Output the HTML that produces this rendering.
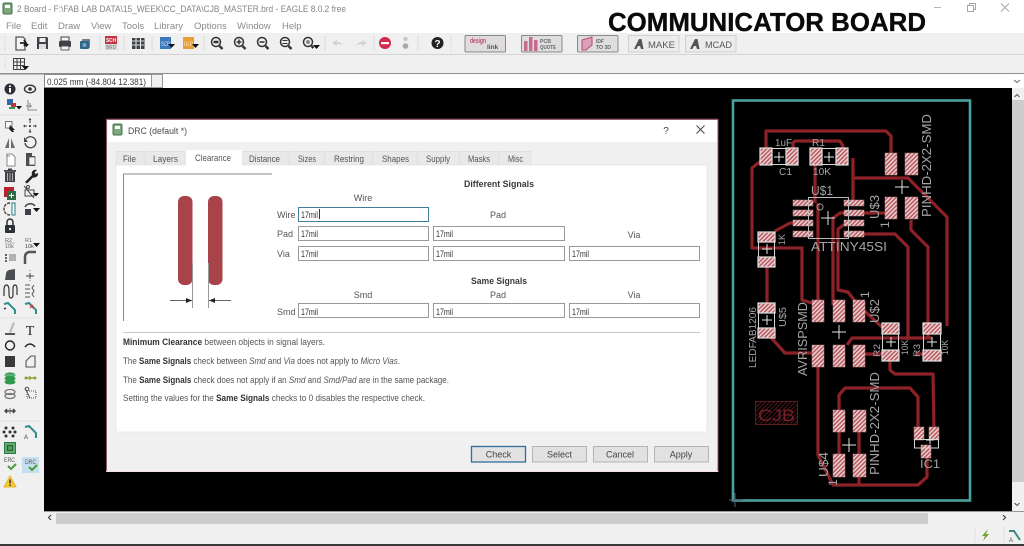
<!DOCTYPE html>
<html><head><meta charset="utf-8"><title>EAGLE DRC</title>
<style>
html,body{margin:0;padding:0;background:#f0f0f0;overflow:hidden}
svg{display:block;filter:blur(.3px)}
text{font-family:"Liberation Sans",sans-serif}
</style></head><body>
<svg xmlns="http://www.w3.org/2000/svg" width="1024" height="546" viewBox="0 0 1024 546">
<defs>
<pattern id="h" width="3" height="3" patternUnits="userSpaceOnUse" patternTransform="rotate(-45)">
<rect width="3" height="3" fill="#b2545a"/><rect width="3" height="1.600" fill="#eccfd0"/>
</pattern>
<pattern id="d" width="3" height="3" patternUnits="userSpaceOnUse" patternTransform="rotate(-45)">
<rect width="3" height="3" fill="#000"/><rect width="3" height="1" fill="#4c1418"/>
</pattern>
</defs>

<!-- window chrome -->
<rect width="1024" height="546" fill="#f0f0f0"/>
<rect width="1024" height="33" fill="#fff"/>
<rect x="3" y="3" width="9" height="11" rx="1.500" fill="#7da77c" stroke="#3f7048"/>
<rect x="5" y="5" width="5" height="3" fill="#fff"/>
<text x="17" y="12" font-size="9.500" fill="#858585" textLength="329" lengthAdjust="spacingAndGlyphs">2 Board - F:\FAB LAB DATA\15_WEEK\CC_DATA\CJB_MASTER.brd - EAGLE 8.0.2 free</text>
<g font-size="9.500" fill="#8a8a8a">
<text x="6" y="29">File</text><text x="31" y="29">Edit</text><text x="58" y="29">Draw</text><text x="91" y="29">View</text><text x="122" y="29">Tools</text><text x="154" y="29">Library</text><text x="194" y="29">Options</text><text x="237" y="29">Window</text><text x="282" y="29">Help</text>
</g>
<text x="608" y="31" font-size="26" font-weight="700" fill="#0a0a0a" stroke="#0a0a0a" stroke-width=".35" textLength="318" lengthAdjust="spacingAndGlyphs">COMMUNICATOR BOARD</text>
<path d="M934 7.500h7" stroke="#b5b5b5" fill="none"/>
<path d="M967.500 5.500h6v6h-6zM969.500 5.500v-2h6v6h-2" stroke="#a5a5a5" fill="none"/>
<path d="M1001 3.500l8 8M1009 3.500l-8 8" stroke="#a8a8a8" fill="none"/>

<rect y="54" width="1024" height="1" fill="#d4d4d4"/>
<rect y="73" width="1024" height="1.500" fill="#8e8e8e"/>
<path d="M5 36v15M5 58v12M451 35v17M118 36v15" stroke="#cfcfcf" stroke-dasharray="1 1"/>
<path d="M100 36v15M124 36v15M152 36v15M204 36v15M325 36v15M374 36v15M418 36v15" stroke="#dcdcdc"/>

<!-- top icons -->
<path d="M16 37h7l2 2v11h-9z" fill="#f4f4f4" stroke="#555" stroke-width="1.300"/>
<path d="M20 43h6l-2-3M26 43l-2 3" fill="none" stroke="#222" stroke-width="1.800"/>
<path d="M24 44h5l-2.500 3z" fill="#111"/>
<path d="M37 37h10l1 1v11h-11z" fill="#3e4148"/><rect x="39.500" y="38" width="6" height="4" fill="#eee"/><rect x="39" y="44" width="7" height="5" fill="#ddd"/>
<path d="M61 37h8v4h-8z" fill="#f4f4f4" stroke="#444"/><rect x="59" y="41" width="12" height="6" rx="1" fill="#3e4148"/><rect x="61" y="46" width="8" height="4" fill="#eee" stroke="#444" stroke-width=".8"/>
<rect x="82" y="39" width="8" height="9" rx="1" fill="#6d7f8c"/><rect x="80" y="41" width="9" height="8" rx="1" fill="#30688a"/><circle cx="84.500" cy="45" r="2" fill="#7ca4bd"/>
<rect x="105" y="36" width="12" height="14" fill="#d8d8d8"/><rect x="105" y="36" width="12" height="8" fill="#bf3540"/>
<text x="106" y="42" font-size="5" font-weight="700" fill="#fff" textLength="10" lengthAdjust="spacingAndGlyphs">SCH</text><text x="106" y="49" font-size="5" fill="#777" textLength="10" lengthAdjust="spacingAndGlyphs">BRD</text>
<g fill="#3e4148"><rect x="132" y="38" width="3.500" height="11"/><rect x="136.500" y="38" width="3.500" height="11"/><rect x="141" y="38" width="3.500" height="11"/></g>
<path d="M132 41h12M132 45h12" stroke="#ddd"/>
<rect x="160" y="37" width="11" height="12" fill="#3b78bc"/><text x="161" y="46" font-size="6" fill="#d7e6f5" textLength="9" lengthAdjust="spacingAndGlyphs">SCR</text><path d="M168 44h7l-3.500 4z" fill="#111"/>
<rect x="183" y="37" width="11" height="12" fill="#e99e3a"/><text x="184" y="46" font-size="6" fill="#fbe6c4" textLength="9" lengthAdjust="spacingAndGlyphs">ULP</text><path d="M192 44h7l-3.500 4z" fill="#111"/>
<g fill="none" stroke="#333" stroke-width="1.500">
<circle cx="216" cy="42" r="4.500"/><path d="M219.500 46l3 3" stroke-width="2.400"/><path d="M213.500 42h5" stroke-width="2.500"/>
<circle cx="239" cy="42" r="4.500"/><path d="M242.500 46l3 3" stroke-width="2.400"/><path d="M236.500 42h5M239 39.500v5"/>
<circle cx="262" cy="42" r="4.500"/><path d="M265.500 46l3 3" stroke-width="2.400"/><path d="M259.500 42h5"/>
<circle cx="285" cy="42" r="4.500"/><path d="M288.500 46l3 3" stroke-width="2.400"/><path d="M282.500 40.500h5M282.500 43.500h5" stroke-width="1"/>
<circle cx="308" cy="42" r="4.500"/><path d="M311.500 46l2 2" stroke-width="2.400"/>
</g>
<circle cx="308" cy="42" r="2" fill="#888"/><path d="M313 45h7l-3.500 4z" fill="#111"/>
<path d="M332 43l5-3v2c3 0 5 1 6 4-2-2-4-2-6-2v2z" fill="#d2d2d2"/>
<path d="M367 43l-5-3v2c-3 0-5 1-6 4 2-2 4-2 6-2v2z" fill="#d2d2d2"/>
<circle cx="385" cy="43" r="6" fill="#d3294a"/><rect x="381" y="42" width="8" height="2.200" fill="#fff"/>
<circle cx="405.500" cy="39" r="2.200" fill="#c8c8c8"/><circle cx="405.500" cy="46" r="2.800" fill="#a8a8a8"/>
<circle cx="437.500" cy="43" r="6" fill="#222"/><text x="437.500" y="47" font-size="10" font-weight="700" fill="#fff" text-anchor="middle">?</text>

<!-- branded buttons -->
<rect x="465" y="35.500" width="40.500" height="16.500" rx="1" fill="#e0dcdc" stroke="#888"/>
<text x="470" y="43" font-size="7" font-weight="700" fill="#b84a76" textLength="16" lengthAdjust="spacingAndGlyphs">design</text>
<text x="487" y="49" font-size="6.500" font-weight="700" fill="#555">link</text>
<rect x="521.500" y="35.500" width="40.500" height="16.500" rx="1" fill="#dedede" stroke="#888"/>
<g fill="#c76a90"><rect x="524" y="41" width="3.500" height="10"/><rect x="529" y="37" width="3.500" height="14"/><rect x="534" y="40" width="3.500" height="11"/></g>
<text x="540" y="43" font-size="5" font-weight="700" fill="#666" textLength="11" lengthAdjust="spacingAndGlyphs">PCB</text><text x="540" y="49" font-size="5" font-weight="700" fill="#666" textLength="16" lengthAdjust="spacingAndGlyphs">QUOTE</text>
<rect x="577.500" y="35.500" width="40.500" height="16.500" rx="1" fill="#dedede" stroke="#888"/>
<path d="M582 40l10-3v8l-6 5h-4z" fill="#dca0b8" stroke="#b84a76"/>
<text x="596" y="43" font-size="5" font-weight="700" fill="#666" textLength="8" lengthAdjust="spacingAndGlyphs">IDF</text><text x="596" y="49" font-size="5" font-weight="700" fill="#666" textLength="15" lengthAdjust="spacingAndGlyphs">TO 3D</text>
<rect x="628.500" y="35.500" width="50.500" height="16.500" fill="#ececec" stroke="#d0d0d0"/>
<path d="M634 49l5-10h2.500l2 10h-2.500l-1-3h-2l-1.500 3z" fill="#555"/>
<text x="648" y="48" font-size="9" fill="#555" textLength="27" lengthAdjust="spacingAndGlyphs">MAKE</text>
<rect x="685.500" y="35.500" width="50.500" height="16.500" fill="#ececec" stroke="#d0d0d0"/>
<path d="M690 49l5-10h2.500l2 10h-2.500l-1-3h-2l-1.500 3z" fill="#555"/>
<text x="705" y="48" font-size="9" fill="#555" textLength="27" lengthAdjust="spacingAndGlyphs">MCAD</text>

<!-- grid icon -->
<path d="M13.500 58.500h11v11h-11zM13.500 62h11M13.500 65.500h11M17 58.500v11M20.500 58.500v11" fill="none" stroke="#444"/>
<path d="M22 66h7l-3.500 4z" fill="#111"/>

<!-- command row -->
<rect x="44" y="74" width="980" height="14" fill="#fff"/>
<rect x="44.500" y="74.500" width="107" height="13" fill="#fff" stroke="#888"/>
<rect x="151.500" y="74.500" width="11" height="13" fill="#f0f0f0" stroke="#999"/>
<text x="47" y="85" font-size="9" fill="#3a3a3a" textLength="99" lengthAdjust="spacingAndGlyphs">0.025 mm (-84.804 12.381)</text>
<path d="M1014 80l3 2.500 3-2.500" fill="none" stroke="#666"/>

<!-- canvas -->
<rect x="44" y="88" width="968" height="423" fill="#000"/>
<rect x="1012" y="88" width="12" height="423" fill="#f0f0f0"/>
<rect x="1012" y="100" width="12" height="382" fill="#cdcdcd"/>
<path d="M1014.500 97l2.500-2.500 2.500 2.500M1014.500 503l2.500 2.500 2.500-2.500" fill="none" stroke="#555"/>
<rect x="44" y="511" width="980" height="1" fill="#999"/>
<rect x="44" y="512" width="968" height="12" fill="#f0f0f0"/>
<rect x="56" y="513" width="872" height="11" fill="#cdcdcd"/>
<path d="M51 515l-2.500 2.500 2.500 2.500M1003 515l2.500 2.500-2.500 2.500" fill="none" stroke="#444" stroke-width="1.200"/>
<rect y="544" width="1024" height="2" fill="#3a3a3a"/>
<path d="M975 527v16M1004 527v16" stroke="#e0e0e0"/>
<path d="M988 529l-6 7h3l-2 5 6-7h-3z" fill="#6ea32e"/>
<path d="M1009 531h5l6 9" fill="none" stroke="#3a8a86" stroke-width="2"/>
<text x="1009" y="542" font-size="6" fill="#555">A</text>

<!-- left toolbar -->
<circle cx="10" cy="89" r="5.500" fill="#2c2f36"/><rect x="9" y="88" width="2" height="4.500" fill="#fff"/><rect x="9" y="85.500" width="2" height="1.500" fill="#fff"/>
<ellipse cx="30" cy="89" rx="5.500" ry="3.800" fill="none" stroke="#333" stroke-width="1.400"/><circle cx="30" cy="89" r="1.800" fill="#333"/>
<rect x="7" y="99" width="6" height="6" fill="#2e6ab0"/><rect x="11" y="103" width="5" height="4" fill="#c9303c"/><path d="M9 108h6" stroke="#2a9a5a" stroke-width="2"/><path d="M16 106h6l-3 3.500z" fill="#111"/>
<path d="M28 100v10h9M26 106h6M30 103v5" stroke="#888" fill="none"/>
<path d="M0 115h40" stroke="#e0e0e0"/>
<rect x="5.500" y="121.500" width="6.500" height="6.500" fill="#f8f8f8" stroke="#777"/><path d="M10 125l5 5-2 0 1 2-2 0-3-3z" fill="#222"/>
<circle cx="30" cy="126" r="1.100" fill="#444"/><path d="M30 119v4M30 129v4M24 126h3M33 126h3" stroke="#444"/><path d="M28.500 120l1.500-2 1.500 2zM28.500 131l1.500 2 1.500-2zM25 124.500l-2 1.500 2 1.500zM35 124.500l2 1.500-2 1.500z" fill="#444"/>
<path d="M9 138v10H5zM11 138v10h4z" fill="#6a6f75"/>
<path d="M26 139a5.500 5.500 0 1 1-1 4" fill="none" stroke="#444" stroke-width="1.300"/><path d="M24 137v5h4z" fill="#444"/>
<path d="M7 154h5l3 3v9H7z" fill="#fff" stroke="#888"/><path d="M6 156h4" stroke="#888"/>
<path d="M26 153h6v3h3v10h-9z" fill="#4a4d52"/><rect x="29" y="157" width="6" height="8" fill="#f2f2f2" stroke="#555" stroke-width=".8"/>
<rect x="5" y="172" width="10" height="10" fill="#3d4046"/><rect x="4" y="170" width="12" height="1.800" fill="#3d4046"/><rect x="8" y="168.500" width="4" height="1.500" fill="#3d4046"/><path d="M7.500 173v8M10 173v8M12.500 173v8" stroke="#ccc" stroke-width=".8"/>
<path d="M25 182l7-7c-1-3 1-6 5-5l-2.500 2.500 1 1.500 2.500-1c.5 3-2 5-5 4.500l-6 6z" fill="#222"/>
<rect x="4" y="187" width="10" height="10" fill="#b8202f"/><rect x="7" y="191" width="9" height="9" fill="#2f6b46"/><path d="M9 195.500h5M11.500 193v5" stroke="#fff"/>
<rect x="25" y="190" width="9" height="6" fill="none" stroke="#444"/><circle cx="28" cy="187" r="1.500" fill="none" stroke="#444"/><path d="M24 186l10 12" stroke="#444"/><path d="M33 193h6l-3 3.500z" fill="#111"/>
<path d="M10 203c-4 0-6 3-6 6s2 6 6 6" fill="none" stroke="#444" stroke-width="1.400" stroke-dasharray="3 1"/><rect x="12" y="203" width="3" height="12" fill="#fff" stroke="#2a7a80"/>
<path d="M25 207a6 6 0 0 1 10-1" fill="none" stroke="#444" stroke-width="1.500"/><rect x="25" y="209" width="6" height="6" fill="#3d4046"/><path d="M33 208h7l-3.500 4z" fill="#111"/>
<rect x="5" y="225" width="10" height="8" rx="1" fill="#2d3036"/><path d="M7 225v-3a3 3 0 0 1 6 0v3" fill="none" stroke="#2d3036" stroke-width="1.500"/><circle cx="10" cy="229" r="1.100" fill="#fff"/>
<text x="5" y="242" font-size="5.500" fill="#666">R2</text><text x="5" y="248" font-size="5.500" fill="#666">10k</text><path d="M5 243h10" stroke="#999" stroke-width=".7"/>
<text x="25" y="242" font-size="5.500" fill="#666">R1</text><text x="25" y="248" font-size="5.500" fill="#444">10k</text><path d="M33 243h7l-3.500 4z" fill="#111"/>
<path d="M5 255h2M5 258h2M5 261h2" stroke="#333" stroke-width="1.500"/><rect x="9" y="254" width="7" height="7" fill="#aeb1b5"/>
<path d="M25 264v-7q0-4 4-5h7" fill="none" stroke="#555" stroke-width="2.500"/>
<path d="M5 280l1-6q0-3 3-4l6-1v11z" fill="#4a4d52"/>
<path d="M30 270v1M30 280v1" stroke="#888"/><path d="M26 276h8M30 273v6" stroke="#444"/>
<path d="M4 296v-5q0-6 2.500-6t2.500 6v3q0 4 2 4t2-4v-5q0-4 2-4t2 4v6" fill="none" stroke="#333" stroke-width="1.200"/>
<path d="M25 285h5M25 289h5M25 293h5M25 297h5M34 285l-2 3 2 3-2 3 2 3" fill="none" stroke="#555"/>
<path d="M4 304l4-1 7 7v4" fill="none" stroke="#2f8f8c" stroke-width="2"/>
<path d="M4 309l2-1" stroke="#333" stroke-width="1.400"/>
<path d="M25 304l4-1 7 7v4" fill="none" stroke="#2f8f8c" stroke-width="2"/><path d="M30 305l3 3M33 305l-3 3" stroke="#c33"/>
<path d="M0 318h40" stroke="#e0e0e0"/>
<path d="M5 334h10" stroke="#222" stroke-width="1.500"/><path d="M9 332l4-10 2 1-4 10z" fill="#b9b9b9"/>
<text x="30" y="335" font-size="14" fill="#222" text-anchor="middle" style="font-family:'Liberation Serif',serif">T</text>
<circle cx="10" cy="345.500" r="4.500" fill="none" stroke="#222" stroke-width="1.400"/>
<path d="M25 347q5-6 10 0" fill="none" stroke="#222" stroke-width="1.500"/>
<rect x="5" y="356" width="10" height="11" fill="#3a3a3a"/>
<path d="M26 367v-6l5-5h4v11z" fill="none" stroke="#555" stroke-width="1.100"/>
<g fill="#2f9a50"><ellipse cx="10" cy="375" rx="5.500" ry="2.500"/><ellipse cx="10" cy="378.500" rx="5.500" ry="2.500"/><ellipse cx="10" cy="382" rx="5.500" ry="2.500"/></g>
<path d="M5 375h10" stroke="#eee" stroke-width=".5"/>
<path d="M25 378h11" stroke="#8aa030" stroke-width="1.500"/><circle cx="26" cy="378" r="1.500" fill="#8aa030"/><circle cx="35" cy="378" r="1.500" fill="#8aa030"/><path d="M29 376l2 2-2 2" fill="none" stroke="#8aa030"/>
<g fill="none" stroke="#777" stroke-width="1.300"><ellipse cx="10" cy="392" rx="5" ry="2.500"/><ellipse cx="10" cy="396" rx="5" ry="2.500"/></g>
<rect x="27" y="391" width="9" height="7" fill="none" stroke="#555" stroke-dasharray="1 1"/><circle cx="27" cy="389" r="1.800" fill="none" stroke="#555"/><path d="M25 388l5 10" stroke="#555"/>
<path d="M5 411h10M7 409l-2 2 2 2M13 409l2 2-2 2" fill="none" stroke="#444" stroke-width="1.400"/><path d="M10 408v6" stroke="#777"/>
<path d="M0 421h40" stroke="#e0e0e0"/>
<g fill="#333"><circle cx="6" cy="428" r="1.500"/><circle cx="13" cy="428" r="1.500"/><circle cx="10" cy="432" r="1.500"/><circle cx="6" cy="436" r="1.500"/><circle cx="13" cy="436" r="1.500"/><circle cx="15" cy="432" r="1.500"/><circle cx="4" cy="432" r="1.500"/></g>
<path d="M25 427l4-1 7 7v5" fill="none" stroke="#2f8f8c" stroke-width="2"/><text x="24" y="439" font-size="6" fill="#444">A</text>
<rect x="4.500" y="442.500" width="11" height="11" fill="#5fae6f" stroke="#2f7a45"/><rect x="7.500" y="445.500" width="5" height="5" fill="#4d9c5d" stroke="#245f35"/>
<text x="4" y="462" font-size="6" fill="#555" textLength="11" lengthAdjust="spacingAndGlyphs">ERC</text><path d="M8 466l3 3 5-5" fill="none" stroke="#4b9a38" stroke-width="2"/>
<rect x="22" y="457" width="17" height="16" fill="#c6dff0"/><text x="25" y="464" font-size="6" fill="#555" textLength="11" lengthAdjust="spacingAndGlyphs">DRC</text><path d="M29 467l3 3 5-5" fill="none" stroke="#4b9a38" stroke-width="2"/>
<path d="M10 476l6 11H4z" fill="#f5c932" stroke="#e8b820" stroke-linejoin="round"/><rect x="9.300" y="479.500" width="1.500" height="4" fill="#333"/><rect x="9.300" y="484.500" width="1.500" height="1.500" fill="#333"/>

<!-- PCB traces -->
<g fill="none" stroke="#8c2228" stroke-width="3.200" stroke-linejoin="round">
<path d="M766 153V131H886L891 136V153"/>
<path d="M793 153V143L795 141H840L843 146V155"/>
<path d="M762 160L752 168V248H802V300L812 303"/>
<path d="M815 157V203M818 203V300"/>
<path d="M853 158V178H908L947 217V326"/>
<path d="M853 178V203"/>
<path d="M891 213H840L833 218V305"/>
<path d="M864 224H845L838 229V290L848 292L858 305L882 327"/>
<path d="M863 234H895L908 247V340"/>
<path d="M911 220V230L928 247V338"/>
<path d="M775 231L790 223H796"/>
<path d="M767 262V310"/>
<path d="M767 333L785 353H812"/>
<path d="M818 367V455L833 485H918L927 477V458"/>
<path d="M839 455V395L845 388H910L918 397V432"/>
<path d="M859 412V485"/>
<path d="M890 358V370L895 374H933L934 430"/>
<path d="M847 345L852 338H932"/>
<path d="M865 354H888"/>
<path d="M933 354H915"/>
</g>

<!-- PCB outline -->
<rect x="733" y="100.500" width="237" height="400" fill="none" stroke="#4aa29e" stroke-width="2.600"/>
<path d="M735 493v14M729 500h14" stroke="#567" stroke-width="1"/>

<!-- smd pads plain -->
<g fill="url(#h)" stroke="#b98488" stroke-width=".5">
<rect x="885" y="153" width="12" height="22"/><rect x="905" y="153" width="13" height="22"/>
<rect x="885" y="197" width="12" height="22"/><rect x="905" y="197" width="13" height="22"/>
<rect x="812" y="300" width="12" height="22"/><rect x="833" y="300" width="12" height="22"/><rect x="853" y="300" width="12" height="22"/>
<rect x="812" y="345" width="12" height="22"/><rect x="833" y="345" width="12" height="22"/><rect x="853" y="345" width="12" height="22"/>
<rect x="833" y="410" width="12" height="22"/><rect x="853" y="410" width="13" height="22"/>
<rect x="833" y="454" width="12" height="23"/><rect x="853" y="454" width="13" height="23"/>
<rect x="793" y="200" width="20" height="6"/><rect x="793" y="210" width="20" height="6"/><rect x="793" y="220" width="20" height="6"/><rect x="793" y="231" width="20" height="6"/>
<rect x="844" y="200" width="20" height="6"/><rect x="844" y="210" width="20" height="6"/><rect x="844" y="220" width="20" height="6"/><rect x="844" y="231" width="20" height="6"/>
<rect x="914" y="427" width="10" height="13"/><rect x="929" y="427" width="10" height="13"/><rect x="921" y="445" width="10" height="13"/>
</g>
<!-- resistors -->
<g fill="url(#h)" stroke="#e0e0e0" stroke-width="1.200">
<rect x="760" y="148" width="12" height="17"/><rect x="786" y="148" width="12" height="17"/>
<rect x="810" y="148" width="12" height="17"/><rect x="836" y="148" width="12" height="17"/>
<rect x="758" y="232" width="17" height="10"/><rect x="758" y="257" width="17" height="10"/>
<rect x="758" y="303" width="17" height="10"/><rect x="758" y="328" width="17" height="10"/>
<rect x="882" y="323" width="17" height="11"/><rect x="882" y="350" width="17" height="11"/>
<rect x="923" y="323" width="18" height="11"/><rect x="923" y="350" width="18" height="11"/>
</g>
<g fill="none" stroke="#d5d5d5" stroke-width="1">
<path d="M772 148.500h14M772 164.500h14M822 148.500h14M822 164.500h14M758.500 242v15M774.500 242v15M758.500 313v15M774.500 313v15M882.500 334v16M898.500 334v16M923.500 334v16M940.500 334v16"/>
<rect x="808.500" y="197.500" width="40" height="41" stroke="#bbb"/>
<circle cx="820" cy="207" r="3" stroke="#999"/>
<rect x="914.500" y="439.500" width="24" height="8.500"/>
</g>
<!-- centre crosses -->
<g fill="none" stroke="#e4e4e4" stroke-width="1">
<path d="M774 157h10M779 152v10M824 157h10M829 152v10M762 249h10M767 244v10M762 320h10M767 315v10M886 342h10M891 337v10M927 342h10M932 337v10M926 440h8M930 436v8"/>
<path d="M895 187h14M902 180v14M821 218h14M828 211v14M832 332h14M839 325v14M842 445h14M849 438v14"/>
</g>
<!-- CJB -->
<rect x="755.500" y="401.500" width="42" height="23" fill="url(#d)" stroke="#5d1a1f"/>
<text x="758" y="421" font-size="17" fill="#742026" textLength="37" lengthAdjust="spacingAndGlyphs">CJB</text>
<!-- PCB text -->
<g fill="#a4a4a4" font-size="13">
<text transform="translate(931 217) rotate(-90)" textLength="103" lengthAdjust="spacingAndGlyphs">PINHD-2X2-SMD</text>
<text transform="translate(879 219) rotate(-90)" textLength="24" lengthAdjust="spacingAndGlyphs">U$3</text>
<text transform="translate(889 228) rotate(-90)" font-size="12">1</text>
<text x="775" y="146" font-size="10" textLength="17" lengthAdjust="spacingAndGlyphs">1uF</text>
<text x="812" y="146" font-size="10" textLength="13" lengthAdjust="spacingAndGlyphs">R1</text>
<text x="779" y="175" font-size="10" textLength="13" lengthAdjust="spacingAndGlyphs">C1</text>
<text x="813" y="175" font-size="10" textLength="18" lengthAdjust="spacingAndGlyphs">10K</text>
<text x="811" y="195" textLength="22" lengthAdjust="spacingAndGlyphs">U$1</text>
<text x="811" y="251" textLength="76" lengthAdjust="spacingAndGlyphs">ATTINY45SI</text>
<text transform="translate(785 245) rotate(-90)" font-size="9" textLength="11" lengthAdjust="spacingAndGlyphs">1K</text>
<text transform="translate(869 298) rotate(-90)" font-size="12">1</text>
<text transform="translate(879 323) rotate(-90)" textLength="24" lengthAdjust="spacingAndGlyphs">U$2</text>
<text transform="translate(756 368) rotate(-90)" font-size="10" textLength="61" lengthAdjust="spacingAndGlyphs">LEDFAB1206</text>
<text transform="translate(786 327) rotate(-90)" font-size="10" textLength="20" lengthAdjust="spacingAndGlyphs">U$5</text>
<text transform="translate(807 376) rotate(-90)" textLength="74" lengthAdjust="spacingAndGlyphs">AVRISPSMD</text>
<text transform="translate(880 357) rotate(-90)" font-size="9" textLength="13" lengthAdjust="spacingAndGlyphs">R2</text>
<text transform="translate(908 355) rotate(-90)" font-size="9" textLength="15" lengthAdjust="spacingAndGlyphs">10K</text>
<text transform="translate(920 357) rotate(-90)" font-size="9" textLength="13" lengthAdjust="spacingAndGlyphs">R3</text>
<text transform="translate(948 355) rotate(-90)" font-size="9" textLength="15" lengthAdjust="spacingAndGlyphs">10K</text>
<text transform="translate(879 475) rotate(-90)" textLength="103" lengthAdjust="spacingAndGlyphs">PINHD-2X2-SMD</text>
<text transform="translate(828 477) rotate(-90)" textLength="25" lengthAdjust="spacingAndGlyphs">U$4</text>
<text transform="translate(837 486) rotate(-90)" font-size="12">1</text>
<text x="920" y="468" font-size="12" textLength="20" lengthAdjust="spacingAndGlyphs">IC1</text>
</g>

<!-- dialog -->
<rect x="106.500" y="119.500" width="611.500" height="352" fill="#f0f0f0" stroke="#c9838c"/>
<path d="M106 119h612" stroke="#5e3040"/>
<path d="M106.500 119v352M718 119v352" stroke="#8a5a66"/>
<path d="M106 471.500h612" stroke="#f8dfe3"/>
<rect x="108" y="120" width="609" height="22" fill="#fff"/>
<rect x="113" y="124" width="9" height="11" rx="1.500" fill="#7da77c" stroke="#3f7048"/><rect x="115" y="126" width="5" height="3" fill="#fff"/>
<text x="128" y="134" font-size="9.500" fill="#4a4a4a" textLength="59" lengthAdjust="spacingAndGlyphs">DRC (default *)</text>
<text x="666" y="134" font-size="10" fill="#444" text-anchor="middle">?</text>
<path d="M696.500 125.500l8 8M704.500 125.500l-8 8" stroke="#444" fill="none"/>

<!-- tabs -->
<g fill="#e9e9e9" stroke="#e0e0e0" stroke-width=".8">
<rect x="116" y="151.500" width="28" height="14"/><rect x="145" y="151.500" width="40" height="14"/><rect x="242" y="151.500" width="46" height="14"/><rect x="289" y="151.500" width="35" height="14"/><rect x="325" y="151.500" width="47" height="14"/><rect x="373" y="151.500" width="44" height="14"/><rect x="418" y="151.500" width="41" height="14"/><rect x="460" y="151.500" width="38" height="14"/><rect x="499" y="151.500" width="32" height="14"/>
</g>
<rect x="116" y="165" width="591" height="267" fill="#fff" stroke="#e2e2e2" stroke-width=".6"/>
<rect x="186" y="150" width="56" height="16" fill="#fff"/>
<g font-size="8.800" fill="#555">
<text x="123" y="162" textLength="13" lengthAdjust="spacingAndGlyphs">File</text>
<text x="153" y="162" textLength="25" lengthAdjust="spacingAndGlyphs">Layers</text>
<text x="195" y="161" textLength="36" lengthAdjust="spacingAndGlyphs">Clearance</text>
<text x="249" y="162" textLength="31" lengthAdjust="spacingAndGlyphs">Distance</text>
<text x="298" y="162" textLength="18" lengthAdjust="spacingAndGlyphs">Sizes</text>
<text x="334" y="162" textLength="30" lengthAdjust="spacingAndGlyphs">Restring</text>
<text x="382" y="162" textLength="27" lengthAdjust="spacingAndGlyphs">Shapes</text>
<text x="426" y="162" textLength="24" lengthAdjust="spacingAndGlyphs">Supply</text>
<text x="468" y="162" textLength="22" lengthAdjust="spacingAndGlyphs">Masks</text>
<text x="508" y="162" textLength="15" lengthAdjust="spacingAndGlyphs">Misc</text>
</g>

<!-- diagram -->
<path d="M123.500 321V174H272" fill="none" stroke="#8a8a8a"/>
<rect x="178" y="196" width="14.500" height="89" rx="6" fill="#a8434a"/>
<rect x="208" y="196" width="14.500" height="89" rx="6" fill="#a8434a"/>
<path d="M192.500 263v45M208.500 263v45" stroke="#999"/>
<path d="M170 300.500h22M209 300.500h22" stroke="#666"/>
<path d="M192 300.500l-6-2.500v5zM209 300.500l6-2.500v5z" fill="#222"/>

<!-- headings and labels -->
<text x="464" y="187" font-size="9" font-weight="700" fill="#3a3a3a" textLength="70" lengthAdjust="spacingAndGlyphs">Different Signals</text>
<text x="471" y="284" font-size="9" font-weight="700" fill="#3a3a3a" textLength="56" lengthAdjust="spacingAndGlyphs">Same Signals</text>
<g font-size="9" fill="#555" text-anchor="middle">
<text x="363" y="201">Wire</text><text x="498" y="218">Pad</text><text x="634" y="238">Via</text>
<text x="363" y="298">Smd</text><text x="498" y="298">Pad</text><text x="634" y="298">Via</text>
</g>
<g font-size="9" fill="#555">
<text x="277" y="218">Wire</text><text x="277" y="237">Pad</text><text x="277" y="257">Via</text><text x="277" y="315">Smd</text>
</g>

<!-- inputs -->
<g fill="#fff" stroke="#9a9a9a">
<rect x="298.500" y="226.500" width="130" height="14"/><rect x="433.500" y="226.500" width="131" height="14"/>
<rect x="298.500" y="246.500" width="130" height="14"/><rect x="433.500" y="246.500" width="131" height="14"/><rect x="569.500" y="246.500" width="130" height="14"/>
<rect x="298.500" y="303.500" width="130" height="14"/><rect x="433.500" y="303.500" width="131" height="14"/><rect x="569.500" y="303.500" width="130" height="14"/>
</g>
<rect x="298.500" y="207.500" width="130" height="14" fill="#fff" stroke="#3f7f9a"/>
<g font-size="9" fill="#333">
<text x="301" y="218" textLength="17" lengthAdjust="spacingAndGlyphs">17mil</text>
<text x="301" y="237" textLength="17" lengthAdjust="spacingAndGlyphs">17mil</text><text x="436" y="237" textLength="17" lengthAdjust="spacingAndGlyphs">17mil</text>
<text x="301" y="257" textLength="17" lengthAdjust="spacingAndGlyphs">17mil</text><text x="436" y="257" textLength="17" lengthAdjust="spacingAndGlyphs">17mil</text><text x="572" y="257" textLength="17" lengthAdjust="spacingAndGlyphs">17mil</text>
<text x="301" y="315" textLength="17" lengthAdjust="spacingAndGlyphs">17mil</text><text x="436" y="315" textLength="17" lengthAdjust="spacingAndGlyphs">17mil</text><text x="572" y="315" textLength="17" lengthAdjust="spacingAndGlyphs">17mil</text>
</g>
<path d="M319.500 209v10" stroke="#333"/>

<!-- help text -->
<path d="M123 332.500h577" stroke="#c8c8c8"/>
<g font-size="9" fill="#555">
<text x="123" y="345" textLength="202" lengthAdjust="spacingAndGlyphs"><tspan font-weight="700" fill="#333">Minimum Clearance</tspan> between objects in signal layers.</text>
<text x="123" y="364" textLength="277" lengthAdjust="spacingAndGlyphs">The <tspan font-weight="700" fill="#333">Same Signals</tspan> check between <tspan font-style="italic">Smd</tspan> and <tspan font-style="italic">Via</tspan> does not apply to <tspan font-style="italic">Micro Vias</tspan>.</text>
<text x="123" y="383" textLength="326" lengthAdjust="spacingAndGlyphs">The <tspan font-weight="700" fill="#333">Same Signals</tspan> check does not apply if an <tspan font-style="italic">Smd</tspan> and <tspan font-style="italic">Smd/Pad</tspan> are in the same package.</text>
<text x="123" y="401" textLength="302" lengthAdjust="spacingAndGlyphs">Setting the values for the <tspan font-weight="700" fill="#333">Same Signals</tspan> checks to 0 disables the respective check.</text>
</g>

<!-- buttons -->
<rect x="471.500" y="446.500" width="54" height="15.500" fill="#e2e2e2" stroke="#2f6f9f" stroke-width="1.300"/>
<g fill="#e1e1e1" stroke="#b4b4b4">
<rect x="532.500" y="446.500" width="54" height="15.500"/><rect x="593.500" y="446.500" width="54" height="15.500"/><rect x="654.500" y="446.500" width="54" height="15.500"/>
</g>
<g font-size="9" fill="#444" text-anchor="middle">
<text x="498.500" y="457.500">Check</text><text x="559.500" y="457.500">Select</text><text x="620" y="457.500">Cancel</text><text x="681" y="457.500">Apply</text>
</g>
</svg>
</body></html>
